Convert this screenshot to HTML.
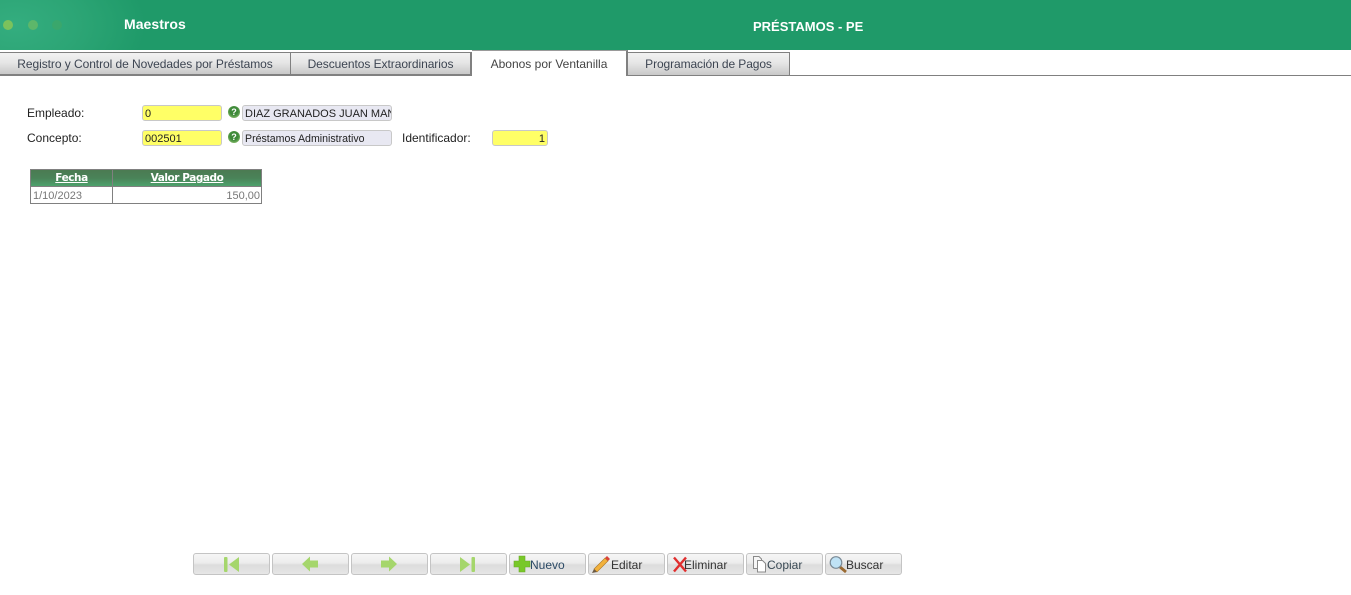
<!DOCTYPE html>
<html lang="es">
<head>
<meta charset="utf-8">
<title>Préstamos - PE</title>
<style>
html,body{margin:0;padding:0;background:#fff;}
body{width:1351px;height:595px;position:relative;overflow:hidden;font-family:"Liberation Sans",sans-serif;font-size:12px;color:#333;}
.a{position:absolute;white-space:nowrap;}
#hdr{left:0;top:0;width:1351px;height:50px;background:#1f9a69;}
#glow{left:0;top:0;width:170px;height:50px;background:radial-gradient(ellipse 130px 80px at 15px 25px,#34ad7f 0%,#2ca575 50%,#1f9a69 100%);}
.dot{position:absolute;width:10px;height:10px;border-radius:50%;top:20px;}
.ttl{color:#fff;font-weight:bold;font-family:"Liberation Sans",sans-serif;}
.tab{position:absolute;top:52px;box-sizing:border-box;height:24px;border-style:solid;border-color:#808080;border-width:1px 2px 2px 1px;background:linear-gradient(#f2f2f2 0%,#e6e6e6 45%,#c8c8c8 100%);text-align:center;line-height:22px;color:#3d4552;font-size:12px;letter-spacing:-.06px;white-space:nowrap;}
.tab.on{background:#fff;top:50px;height:26px;line-height:27px;border-width:1px 2px 0 0;border-color:#9a9a9a #808080 #fff #fff;color:#444;letter-spacing:0;}
.lbl{position:absolute;color:#222;font-size:12px;line-height:14px;white-space:nowrap;}
.inp{position:absolute;height:14px;border:1px solid #c8c8c8;border-radius:3px;background:#ffff66;font-size:11px;line-height:16px;color:#222;padding:0 2px;white-space:nowrap;overflow:hidden;}
.ro{background:#e8e8f2;}
.q{position:absolute;left:228px;width:12px;height:12px;border-radius:50%;background:radial-gradient(circle at 50% 42%,#3f8a3a 0%,#3f8a3a 45%,#7db463 75%,#cfe6b8 100%);color:#fff;font:bold 9px/12px "Liberation Sans",sans-serif;text-align:center;}
#grid{position:absolute;left:30px;top:169px;width:232px;height:35px;box-sizing:border-box;border:1px solid #808080;}
.gh{position:absolute;top:0;height:16px;background:linear-gradient(#4b7a52 0%,#4a8258 50%,#4da26c 100%);color:#fff;font-weight:bold;text-decoration:underline;text-align:center;font-size:10.5px;letter-spacing:-.45px;line-height:17px;font-family:"DejaVu Sans",sans-serif;}
.gd{position:absolute;top:17px;height:17px;line-height:19px;color:#777;font-size:11px;}
.btn{position:absolute;top:553px;width:77px;height:22px;box-sizing:border-box;border:1px solid #c4c4c4;border-radius:3px;background:linear-gradient(#f6f6f6 0%,#ececec 45%,#dcdcdc 55%,#e6e6e6 100%);}
.btn svg{position:absolute;left:0;top:0;}
.btn span{position:absolute;top:4px;font-size:12px;color:#333;line-height:14px;white-space:nowrap;}
</style>
</head>
<body>
<div id="hdr" class="a"></div>
<div id="glow" class="a">
  <div class="dot" style="left:3px;background:#7bc25c"></div>
  <div class="dot" style="left:28px;background:#5db76a"></div>
  <div class="dot" style="left:52px;background:#3aa76c"></div>
</div>
<div class="a ttl" style="left:124px;top:16px;font-size:14px;letter-spacing:.05px">Maestros</div>
<div class="a ttl" style="left:753px;top:19px;font-size:13px">PRÉSTAMOS - PE</div>

<div class="a" style="left:0;top:75px;width:1351px;height:1px;background:#808080"></div>
<div class="tab" style="left:-1px;width:291px;border-right-width:0;">Registro y Control de Novedades por Préstamos</div>
<div class="tab" style="left:290px;width:182px;">Descuentos Extraordinarios</div>
<div class="tab on" style="left:472px;width:156px;">Abonos por Ventanilla</div>
<div class="tab" style="left:628px;width:162px;border-width:1px 1px 1px 0;letter-spacing:-.1px;">Programación de Pagos</div>

<div class="lbl" style="left:27px;top:106px">Empleado:</div>
<div class="inp" style="left:142px;top:105px;width:74px">0</div>
<div class="q" style="top:106px">?</div>
<div class="inp ro" style="left:242px;top:105px;width:144px;">DIAZ GRANADOS JUAN MAN</div>

<div class="lbl" style="left:27px;top:131px">Concepto:</div>
<div class="inp" style="left:142px;top:130px;width:74px;">002501</div>
<div class="q" style="top:131px">?</div>
<div class="inp ro" style="left:242px;top:130px;width:144px;font-size:10.6px">Préstamos Administrativo</div>
<div class="lbl" style="left:402px;top:131px">Identificador:</div>
<div class="inp" style="left:492px;top:130px;width:50px;text-align:right">1</div>

<div id="grid">
  <div class="gh" style="left:0;width:81px;">Fecha</div>
  <div class="a" style="left:81px;top:0;width:1px;height:33px;background:#808080"></div>
  <div class="gh" style="left:82px;width:148px;">Valor Pagado</div>
  <div class="a" style="left:0;top:16px;width:230px;height:1px;background:#808080"></div>
  <div class="gd" style="left:2px;">1/10/2023</div>
  <div class="gd" style="right:1px;">150,00</div>
</div>

<div class="btn" style="left:193px"><svg width="77" height="22"><rect x="30" y="3" width="3.5" height="15" rx="1" fill="#a5d66c"/><path d="M35 10.5 L45 3 V18 Z" fill="#a5d66c"/></svg></div>
<div class="btn" style="left:272px"><svg width="77" height="22"><path d="M29 10 L37 2.5 V6.5 H45 V13.5 H37 V17.5 Z" fill="#a5d66c"/></svg></div>
<div class="btn" style="left:351px"><svg width="77" height="22"><path d="M45 10 L37 2.5 V6.5 H29 V13.5 H37 V17.5 Z" fill="#a5d66c"/></svg></div>
<div class="btn" style="left:430px"><svg width="77" height="22"><path d="M29 3 L39 10.5 L29 18 Z" fill="#a5d66c"/><rect x="40.5" y="3" width="3.5" height="15" rx="1" fill="#a5d66c"/></svg></div>

<div class="btn" style="left:509px"><svg width="77" height="22"><path d="M9 2 H15 V7 H20 V13 H15 V18 H9 V13 H4 V7 H9 Z" fill="#78c828" stroke="#6aa82a" stroke-width=".6"/></svg><span style="left:20px;color:#2b4a66">Nuevo</span></div>
<div class="btn" style="left:588px"><svg width="77" height="22"><path d="M5 15 L16 4 L19 7 L8 18 Z" fill="#f2b13c" stroke="#a9772a" stroke-width=".6"/><path d="M16 4 L18 2 L21 5 L19 7 Z" fill="#d9433a"/><path d="M3 19 L5 15 L8 18 Z" fill="#6b5a45"/></svg><span style="left:22px">Editar</span></div>
<div class="btn" style="left:667px"><svg width="77" height="22"><path d="M6 3.5 L18 17.5 M18 3.5 L6 17.5" stroke="#e02e2e" stroke-width="2.4" fill="none"/></svg><span style="left:16px">Eliminar</span></div>
<div class="btn" style="left:746px"><svg width="77" height="22"><path d="M6.5 2.5 H12 L14.5 5 V14.5 H6.5 Z" fill="#f6f6f6" stroke="#8a8a8a"/><path d="M10.5 6.5 H15.5 L18.5 9.5 V18 H10.5 Z" fill="#fff" stroke="#8a8a8a"/></svg><span style="left:20px;color:#3a4a55">Copiar</span></div>
<div class="btn" style="left:825px"><svg width="77" height="22"><path d="M14 13 L20 18" stroke="#9a6a32" stroke-width="2.8"/><circle cx="10" cy="8.5" r="5.8" fill="#bfe2f5" stroke="#7a8a96" stroke-width="1.2"/></svg><span style="left:20px">Buscar</span></div>
</body>
</html>
